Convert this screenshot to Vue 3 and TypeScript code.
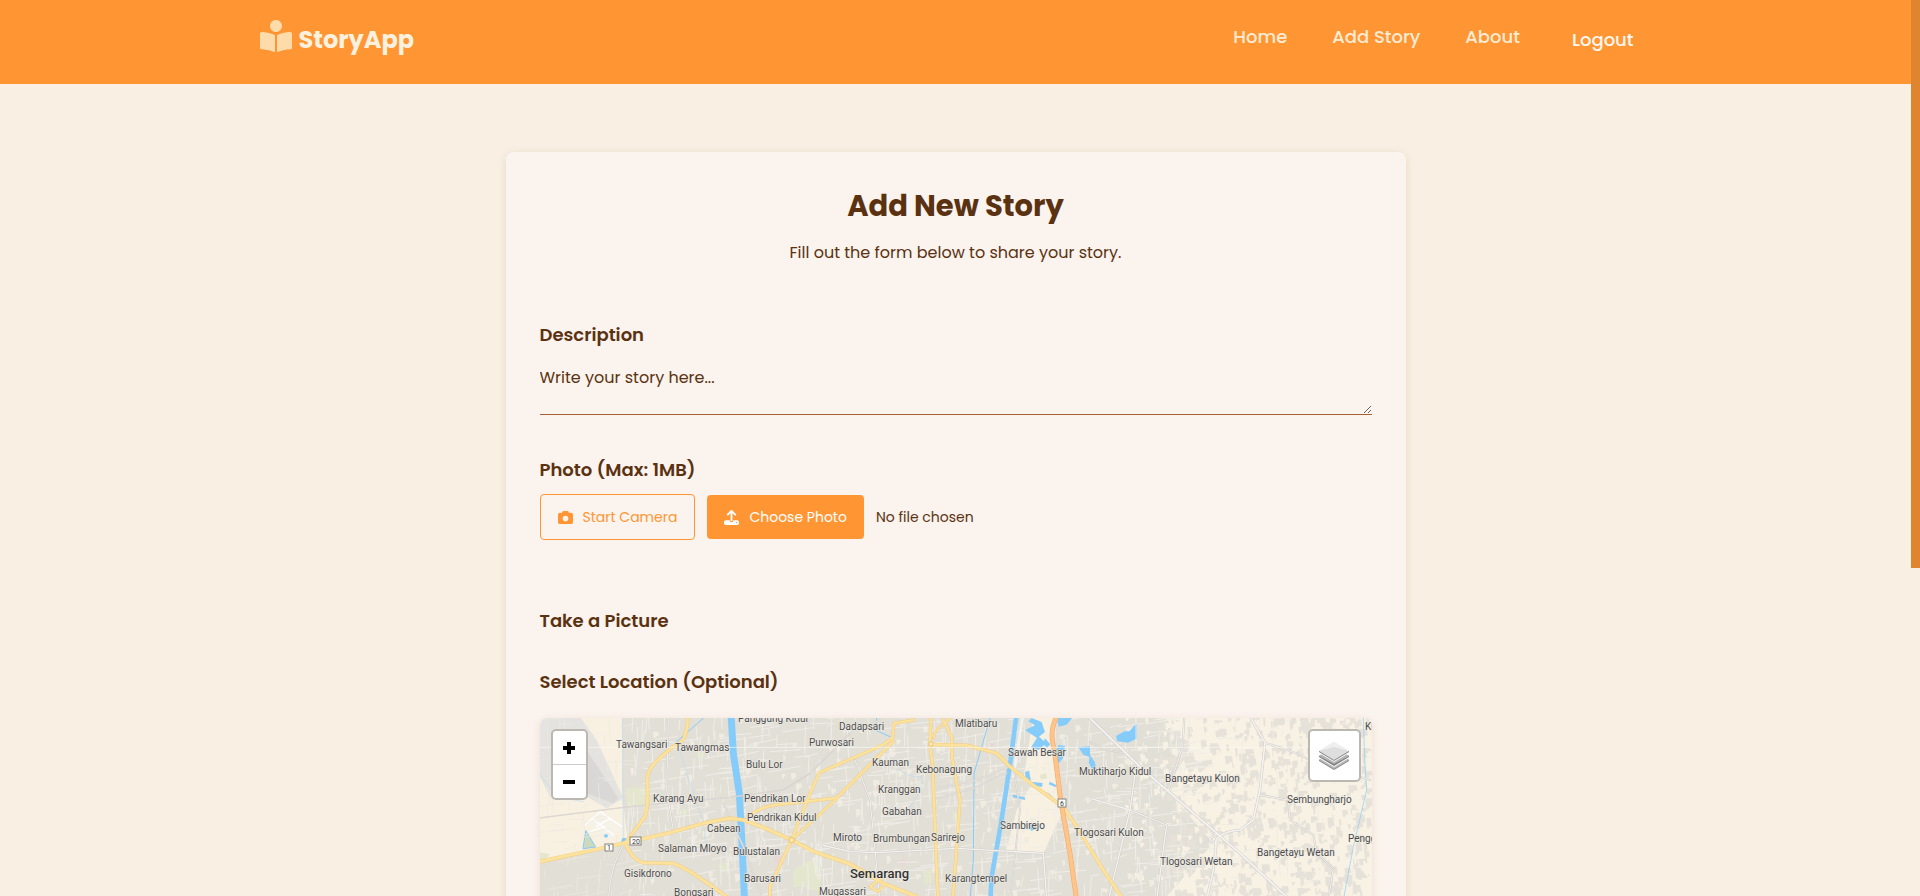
<script setup lang="ts">
import { ref } from 'vue'

interface Place { name: string; x: number; y: number; city?: boolean }
interface Road { d: string; w: number }

const description = ref('')
const fileName = ref('No file chosen')
const navLinks = ['Home', 'Add Story', 'About']

function onFile(event: Event) {
  const files = (event.target as HTMLInputElement).files
  fileName.value = files && files.length ? files[0].name : 'No file chosen'
}

const places: Place[] = [
  { name: 'Tawangsari', x: 76, y: 30 },
  { name: 'Tawangmas', x: 135, y: 33 },
  { name: 'Panggung Kidul', x: 198, y: 4 },
  { name: 'Bulu Lor', x: 206, y: 50 },
  { name: 'Karang Ayu', x: 113, y: 84 },
  { name: 'Pendrikan Lor', x: 204, y: 84 },
  { name: 'Pendrikan Kidul', x: 207, y: 103 },
  { name: 'Cabean', x: 167, y: 114 },
  { name: 'Salaman Mloyo', x: 118, y: 134 },
  { name: 'Bulustalan', x: 193, y: 137 },
  { name: 'Gisikdrono', x: 84, y: 159 },
  { name: 'Barusari', x: 204, y: 164 },
  { name: 'Bongsari', x: 134, y: 178 },
  { name: 'Dadapsari', x: 299, y: 12 },
  { name: 'Purwosari', x: 269, y: 28 },
  { name: 'Kauman', x: 332, y: 48 },
  { name: 'Kebonagung', x: 376, y: 55 },
  { name: 'Kranggan', x: 338, y: 75 },
  { name: 'Gabahan', x: 342, y: 97 },
  { name: 'Miroto', x: 293, y: 123 },
  { name: 'Brumbungan', x: 333, y: 124 },
  { name: 'Sarirejo', x: 391, y: 123 },
  { name: 'Semarang', x: 310, y: 160, city: true },
  { name: 'Mugassari', x: 279, y: 177 },
  { name: 'Karangtempel', x: 405, y: 164 },
  { name: 'Mlatibaru', x: 415, y: 9 },
  { name: 'Sawah Besar', x: 468, y: 38 },
  { name: 'Sambirejo', x: 460, y: 111 },
  { name: 'Tlogosari Kulon', x: 534, y: 118 },
  { name: 'Muktiharjo Kidul', x: 539, y: 57 },
  { name: 'Bangetayu Kulon', x: 625, y: 64 },
  { name: 'Sembungharjo', x: 747, y: 85 },
  { name: 'Bangetayu Wetan', x: 717, y: 138 },
  { name: 'Tlogosari Wetan', x: 620, y: 147 },
  { name: 'Penggaron', x: 808, y: 124 },
  { name: 'Kudu', x: 825, y: 12 },
]

// Road geometry is kept at three units per map pixel.
const mainRoads: Road[] = [
  { d: 'M474 20C470 90 455 100 430 110C380 150 352 175 352 205C352 260 356 290 345 320L288 396', w: 9 },
  { d: 'M20 457L200 418L288 398L420 368L520 340L600 325L640 330L700 352L785 390L850 424L960 462L1060 520L1160 560', w: 10 },
  { d: 'M284 398C300 430 315 452 340 458L430 460C470 475 520 510 590 560', w: 9 },
  { d: 'M720 560V530L785 390L840 250L868 188L1060 104L1088 84L1092 40L1150 30', w: 8 },
  { d: 'M660 318C690 290 720 285 780 280L920 264L1090 94', w: 8 },
  { d: 'M785 390L920 266', w: 7 },
  { d: 'M1203 20L1200 104L1208 170L1218 430L1224 570', w: 8 },
  { d: 'M1200 104L1310 106L1400 130L1440 170L1500 218L1600 292L1640 350L1720 480L1780 570', w: 9 },
  { d: 'M1240 30L1265 80L1267 150L1290 270L1280 410L1268 570', w: 8 },
  { d: 'M1210 85C1215 55 1240 45 1260 25', w: 6 },
  { d: 'M1060 500L1020 530L1045 545L1065 520', w: 7 },
]
const sideRoads: Road[] = [
  { d: 'M20 325L300 290L600 262L760 240L840 190', w: 2 },
  { d: 'M415 20L410 240L430 360', w: 4 },
  { d: 'M284 400C250 450 240 510 235 570', w: 4 },
  { d: 'M1680 25L1830 170L2060 370L2130 430L2280 570', w: 7 },
  { d: 'M2160 20L2205 98L2190 240L2170 330L2130 360C2080 365 2050 380 2058 410L2050 480L2030 570', w: 6 },
  { d: 'M2205 98L2300 130L2360 160L2520 210', w: 4 },
  { d: 'M1963 20L1958 110L1915 240', w: 4 },
  { d: 'M1680 265L1800 300L1910 345L1880 570', w: 5 },
  { d: 'M1815 195L1800 300L1735 570', w: 5 },
  { d: 'M875 405L960 425L1040 428L1280 415L1540 430L1550 570', w: 5 },
  { d: 'M2190 255L2275 270L2280 330L2350 375L2360 430L2410 475L2395 570', w: 4 },
  { d: 'M1220 235L1340 210L1440 170', w: 3 },
  { d: 'M1220 265L1330 235L1430 190', w: 3 },
  { d: 'M1680 95L1720 118L1790 130', w: 3 },
  { d: 'M850 180L960 70L1050 30', w: 3 },
  { d: 'M1440 570L1470 300L1450 170', w: 3 },
  { d: 'M975 150L1020 270L1050 570', w: 4 },
  { d: 'M2060 372L2038 388L2060 405', w: 5 },
  { d: 'M700 570L640 410L580 280', w: 3 },
]

let seed = 42
function rand() {
  seed = (seed * 1103515245 + 12345) % 2147483648
  return seed / 2147483648
}

function streets(count: number, x0: number, x1: number, y1: number) {
  let d = ''
  for (let i = 0; i < count; i++) {
    const x = Math.round(x0 + rand() * (x1 - x0))
    const y = Math.round(rand() * y1)
    const length = 20 + Math.round(rand() * 75)
    const skew = Math.round((rand() - 0.5) * 14)
    d += rand() > 0.5 ? `M${x} ${y}l${length} ${skew - Math.round(length / 8)}` : `M${x} ${y}l${skew} ${length}`
  }
  return d
}

function patches(count: number, x0: number, x1: number, y1: number, size: number) {
  let d = ''
  for (let i = 0; i < count; i++) {
    const x = Math.round(x0 + rand() * (x1 - x0))
    const y = Math.round(rand() * y1)
    const w = 5 + Math.round(rand() * size)
    const h = 5 + Math.round(rand() * size)
    d += `M${x} ${y}h${w}l3 ${h}h${-Math.round(w / 2)}v6h${-Math.round(w / 2)}z`
  }
  return d
}

const cityStreets = streets(1500, 290, 1980, 1200)
const westStreets = streets(170, 20, 300, 1200)
const eastStreets = streets(120, 1900, 2520, 1200)
const openLots = patches(360, 300, 1900, 1200, 13)
const villages = patches(1250, 1880, 2510, 1200, 20)
const clearings = patches(500, 1780, 2510, 1200, 12)
</script>

<template>
  <div class="page">
    <header class="topbar">
      <div class="topbar-inner">
        <a class="brand" href="#">
          <svg class="brand-icon" viewBox="0 0 512 512" aria-hidden="true">
            <path d="M352 96c0-53.02-42.98-96-96-96s-96 42.98-96 96 42.98 96 96 96 96-42.98 96-96zM233.59 241.09c-59.33-36.32-155.43-46.3-203.79-49.05C13.55 191.13 0 203.51 0 219.14v222.8c0 14.33 11.59 26.28 26.49 27.05 43.66 2.29 131.99 10.68 193.04 41.43 9.37 4.72 20.48-1.71 20.48-11.87V252.56c-.01-4.67-2.32-8.95-6.42-11.47zm248.61-49.05c-48.35 2.74-144.46 12.73-203.78 49.05-4.1 2.51-6.41 6.96-6.41 11.63v245.79c0 10.19 11.14 16.63 20.54 11.9 61.04-30.72 149.32-39.11 192.97-41.4 14.9-.78 26.49-12.73 26.49-27.06V219.14c-.01-15.63-13.56-28.01-29.81-27.1z" />
          </svg>
          <span>StoryApp</span>
        </a>
        <nav class="nav">
          <a v-for="link in navLinks" :key="link" href="#">{{ link }}</a>
          <button type="button" class="logout">Logout</button>
        </nav>
      </div>
    </header>

    <main class="card">
      <h1>Add New Story</h1>
      <p class="intro">Fill out the form below to share your story.</p>

      <form @submit.prevent>
        <label class="heading" for="description">Description</label>
        <textarea id="description" v-model="description" placeholder="Write your story here..."></textarea>

        <h2 class="heading">Photo (Max: 1MB)</h2>
        <div class="photo-row">
          <button type="button" class="btn outline">
            <svg viewBox="0 0 512 512" aria-hidden="true">
              <path fill-rule="evenodd" d="M149 64l-10 32H64C29 96 0 125 0 160v256c0 35 29 64 64 64h384c35 0 64-29 64-64V160c0-35-29-64-64-64h-75l-10-32c-7-20-25-32-46-32H195c-21 0-39 12-46 32zM256 192a96 96 0 1 1 0 192 96 96 0 0 1 0-192z" />
            </svg>
            Start Camera
          </button>
          <label class="btn solid" for="photo">
            <svg viewBox="0 0 512 512" aria-hidden="true">
              <path fill-rule="evenodd" d="M288 109V352c0 18-14 32-32 32s-32-14-32-32V109l-73 74c-13 12-33 12-46 0s-12-33 0-45L233 10c13-13 33-13 46 0l128 128c12 12 12 33 0 45s-33 12-46 0zM64 352h128a64 64 0 0 0 128 0h128c35 0 64 29 64 64v32c0 35-29 64-64 64H64c-35 0-64-29-64-64v-32c0-35 29-64 64-64zm368 104a24 24 0 1 0 0-48 24 24 0 0 0 0 48z" />
            </svg>
            Choose Photo
            <input id="photo" type="file" accept="image/*" @change="onFile" />
          </label>
          <span>{{ fileName }}</span>
        </div>

        <h2 class="heading">Take a Picture</h2>
        <h2 class="heading location-heading">Select Location (Optional)</h2>

        <div class="map">
          <svg class="map-canvas" viewBox="0 0 832 400" preserveAspectRatio="xMinYMin slice" role="img" aria-label="Map of Semarang">
            <rect width="833" height="400" fill="#e2dfd7" />
            <g transform="translate(-10 -8) scale(.33333)" fill="none" stroke-linejoin="round" stroke-linecap="round">
              <path fill="#f8f1e2" d="M20 20H277V265L295 400L200 420L20 455zM1500 230L1560 250L1600 300L1540 430L1430 420L1460 300zM1510 20L1480 210L1590 290L1570 100L1580 20z" />
              <path fill="#f8f2e4" d="M1880 20H2530V1200H2000L1900 570L2050 400L1910 240L1980 110z" />
              <path fill="#e4e3e0" d="M20 20H150L200 90L280 265L230 295L170 260L60 260L20 180z" />
              <path fill="#d9d8d6" d="M150 90L265 265L250 280L170 250L60 130z" />
              <path fill="#f7f2e8" d="M210 305L275 350L240 390L165 345z" />
              <path stroke="#fff" stroke-width="4" d="M165 345L210 305L275 350M185 325L250 375M200 350L240 325M180 365L225 350" />
              <path fill="#e4e7ce" d="M287 235L345 230L350 285L290 292zM840 450l30 20v70h-30zM1180 482l25-4v40l-22 6zM790 480l50-30v80h-50zM565 465l25-8 6 24-25 4zM500 130l20-6 4 18-20 4zM450 300l18-4 4 18-20 2zM1530 195l18-6 4 16-20 4zM1268 305h14v24h-14zM2055 325l15-5v22l-18 6zM20 425l40 8-15 17H20z" />
              <path fill="#e8d8d4" d="M735 430l24 14-14 20-14-8zM1105 455l12-10 16 10-18 16zM1370 105l20-8 4 18-14 8z" />
              <path fill="#cdd9bd" stroke="#84c8f5" stroke-width="3" d="M168 363L197 411L160 416z" />
              <path :d="villages" fill="#e7e2d9" />
              <path :d="clearings" fill="#f8f2e4" />
              <path :d="openLots" fill="#f0ece1" />
              <path :d="cityStreets" stroke="#efede7" stroke-width="3" />
              <path :d="westStreets" stroke="#eeeae0" stroke-width="2" />
              <path :d="eastStreets" stroke="#f0ece2" stroke-width="3" />
              <g stroke="#86ccfa">
                <path stroke-width="3" d="M525 20L440 95M1380 25L1332 190L1330 450L1320 570M1040 24L1036 60L1080 80" />
                <path stroke="#b9dcf2" stroke-width="2" d="M440 95L470 190L520 340L530 410M277 20L280 380M1090 150C1110 190 1130 200 1175 200C1190 230 1150 270 1130 310M20 180L80 260L160 275" />
                <path stroke-width="2" d="M2500 20L2505 170L2510 240L2470 410L2440 570" />
                <path stroke-width="21" stroke-linecap="butt" d="M603 10L610 130L628 250L636 400L644 580L642 720" />
                <path stroke-width="14" stroke-linecap="butt" d="M1460 10L1442 150L1413 340L1385 500L1373 720" />
                <path stroke-width="8" stroke="#f2f3f1" d="M1478 20L1450 200" />
              </g>
              <path fill="#86ccfa" d="M1485 60l30-14-20-12 10-10 30 12 10 30-18 14 22 20-24 20-22-8 18-28zM1580 20h50l-20 24-24 6zM1545 85l16 18-10 12-12-14zM1585 105l20 2-6 38-18 20-10-22zM1645 112l35-4v34l-20-8zM1758 78l26-14h14l22-24v46l-26 12-32-4zM1448 254l36 8 2 8-38-8zM1485 186l12-4 6 30-16-8zM1500 215l38 4-2 12-28-6zM1560 215l22 12-6 4-20-8zM1495 348l12-6 20 14-24 6zM1680 135l14 20 6 24-10 5-14-26zM277 383l12 2-4 14-12-2zM225 372l10 2-4 10-10-4z" />
              <path fill="#3f86e5" d="M66 97h14v26H66z" />
              <path v-for="r in sideRoads" :key="'c' + r.d" :d="r.d" stroke="#cfcbc6" :stroke-width="r.w + 2" />
              <path v-for="r in sideRoads" :key="r.d" :d="r.d" stroke="#f5f3f1" :stroke-width="r.w - 1" />
              <path v-for="r in mainRoads" :key="'c' + r.d" :d="r.d" stroke="#efcd85" :stroke-width="r.w + 2" />
              <path v-for="r in mainRoads" :key="r.d" :d="r.d" stroke="#fce29c" :stroke-width="r.w - 1" />
              <path stroke="#eeb077" stroke-width="15" d="M1580 20C1560 60 1565 90 1573 120L1592 270L1620 430L1640 570L1660 760" />
              <path stroke="#ffc489" stroke-width="11" d="M1580 20C1560 60 1565 90 1573 120L1592 270L1620 430L1640 570L1660 760" />
              <circle cx="785" cy="390" r="8" fill="#fce8b0" stroke="#edca7c" stroke-width="4" />
              <circle cx="1203" cy="102" r="6" fill="#f8f1d8" stroke="#f3cf83" stroke-width="4" />
              <path stroke="#faf9f6" stroke-width="2" d="M20 112H2530M1818 20V112" />
            </g>
            <g class="shield">
              <rect x="65" y="126" width="8" height="7" /><text x="69" y="132">1</text>
              <rect x="90" y="119" width="11" height="8" /><text x="96" y="126">20</text>
              <rect x="518" y="81" width="8" height="8" /><text x="522" y="88">6</text>
            </g>
            <g class="places">
              <text v-for="p in places" :key="p.name" :x="p.x" :y="p.y" :class="{ city: p.city }">{{ p.name }}</text>
            </g>
          </svg>
          <div class="zoom-control">
            <button type="button" aria-label="Zoom in"><svg viewBox="0 0 14 14"><path d="M5 1h4v4h4v4H9v4H5V9H1V5h4z" /></svg></button>
            <button type="button" aria-label="Zoom out"><svg viewBox="0 0 14 14"><path d="M1 5h12v4H1z" /></svg></button>
          </div>
          <button type="button" class="layers" aria-label="Layers">
            <svg viewBox="0 0 30 30">
              <path fill="#868686" d="M0 19l15-9 15 9v1l-15 9-15-9z" />
              <path fill="#b9b9b9" d="M0 19l15-9 15 9-15 9z" />
              <path fill="#fff" d="M0 17l15 9 15-9v-3H0z" />
              <path fill="#808080" d="M0 15l15-9 15 9v1l-15 9-15-9z" />
              <path fill="#b4b4b4" d="M0 15l15-9 15 9-15 8z" />
              <path fill="#fff" d="M0 12l15 9 15-9v-2H0z" />
              <path fill="#808080" d="M0 10h30v1l-15 9-15-9z" />
              <path fill="#dedede" d="M15 1l15 9-15 9-15-9z" />
              <path fill="#efefef" d="M15 1l15 9-15-4-15 4z" />
            </svg>
          </button>
        </div>
      </form>
    </main>
    <div class="scroll-thumb" aria-hidden="true"></div>
  </div>
</template>

<style>
body {
  margin: 0;
  background: #f9f0e3;
}
</style>

<style scoped>
.page,
.page * {
  box-sizing: border-box;
}
.page {
  position: relative;
  height: 100vh;
  overflow: hidden;
  padding-right: 9px;
  background: #f9f0e3;
  color: #5a3211;
  font-family: Poppins, Inter, sans-serif;
  font-size: 16px;
  line-height: 24px;
}
.page button,
.page textarea {
  font: inherit;
}
.scroll-thumb {
  position: absolute;
  top: 0;
  right: 0;
  width: 9px;
  height: 568px;
  background: #df842f;
}
.topbar {
  margin-right: -9px;
  padding-right: 9px;
  background: #ff9633;
}
.topbar-inner {
  display: flex;
  justify-content: space-between;
  max-width: 1400px;
  height: 84px;
  margin: 0 auto;
  padding: 0 22px 0 4px;
}
.brand {
  display: flex;
  align-items: flex-start;
  gap: 7px;
  padding-top: 20px;
  color: #fcf0df;
  font-size: 24px;
  font-weight: 700;
  line-height: 40px;
  text-decoration: none;
}
.brand-icon {
  width: 32px;
  height: 32px;
  fill: #fddbab;
}
.nav {
  display: flex;
  align-items: center;
  gap: 45px;
  height: 74px;
  font-size: 18px;
  font-weight: 500;
}
.nav a {
  color: #fdebd4;
  text-decoration: none;
}
.nav .logout {
  margin: 6px 0 0 7px;
  padding: 0;
  border: 0;
  background: none;
  color: #fff8f0;
}
.card {
  max-width: 900px;
  margin: 68px auto;
  padding: 33px 34px;
  border-radius: 8px;
  background: #fbf3ed;
  box-shadow: 0 2px 10px rgba(90, 50, 17, 0.12);
}
h1 {
  margin: 0;
  font-size: 29px;
  font-weight: 700;
  line-height: 42px;
  text-align: center;
}
.intro {
  margin: 14px 0 56px;
  text-align: center;
}
.heading {
  display: block;
  margin: 0;
  font-size: 18px;
  font-weight: 600;
  line-height: 28px;
}
textarea {
  display: block;
  width: 100%;
  height: 57px;
  margin: 9px 0 41px;
  padding: 8px 0;
  border: 0;
  border-bottom: 1px solid #a9622f;
  border-radius: 0;
  outline: 0;
  background: transparent;
  color: inherit;
  overflow: hidden;
  resize: vertical;
}
textarea::placeholder {
  color: #5a3211;
  opacity: 1;
}
.photo-row {
  display: flex;
  align-items: center;
  gap: 12px;
  margin: 10px 0 67px;
  font-size: 14px;
}
.btn {
  position: relative;
  display: flex;
  align-items: center;
  justify-content: center;
  gap: 10px;
  height: 44px;
  padding: 0 17px;
  border: 0;
  border-radius: 4px;
  cursor: pointer;
}
.btn svg {
  width: 15px;
  height: 15px;
  fill: currentColor;
}
.page .outline {
  height: 46px;
  border: 1px solid #ff9633;
  background: transparent;
  color: #ff9633;
}
.solid {
  background: #ff9633;
  color: #fff;
}
.solid input {
  position: absolute;
  inset: 0;
  width: 100%;
  opacity: 0;
}
.location-heading {
  margin-top: 33px;
}
.map {
  position: relative;
  height: 400px;
  margin-top: 22px;
  overflow: hidden;
  border-radius: 8px;
  box-shadow: 0 2px 8px rgba(90, 50, 17, 0.1);
}
.map-canvas {
  display: block;
  width: 100%;
  height: 100%;
}
.places text {
  font-family: Roboto, sans-serif;
  font-size: 10px;
  fill: #4c4c4e;
  stroke: #f1eee6;
  stroke-width: 1px;
  paint-order: stroke;
}
.places .city {
  font-size: 13px;
  font-weight: 500;
  fill: #333;
}
.shield rect {
  fill: #fff;
  stroke: #85817b;
}
.shield text {
  font-family: Roboto, sans-serif;
  font-size: 7px;
  text-anchor: middle;
  fill: #333;
}
.zoom-control {
  position: absolute;
  top: 11px;
  left: 11px;
  width: 37px;
  border: 2px solid #bbb8b2;
  border-radius: 5px;
  background: #fff;
}
.zoom-control button {
  display: flex;
  align-items: center;
  justify-content: center;
  width: 100%;
  height: 33px;
  padding: 0;
  border: 0;
  background: none;
}
.zoom-control button + button {
  height: 34px;
  border-top: 1px solid #ccc;
}
.zoom-control svg {
  width: 14px;
  height: 14px;
}
.layers {
  position: absolute;
  top: 11px;
  right: 11px;
  display: grid;
  place-items: center;
  width: 53px;
  height: 53px;
  padding: 0;
  border: 2px solid #bbb8b2;
  border-radius: 5px;
  background: #fff;
}
.layers svg {
  width: 30px;
  height: 30px;
}
</style>
